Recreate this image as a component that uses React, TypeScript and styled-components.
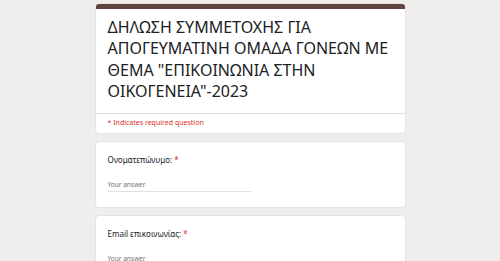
import React from "react";
import styled, { createGlobalStyle } from "styled-components";

const GlobalStyle = createGlobalStyle`
  body {
    margin: 0;
    background: #f0eeec;
    font-family: "Noto Sans", "Open Sans", sans-serif;
    color: #202124;
  }
`;

const Page = styled.div`
  width: 311px;
  margin: 3px auto 0;
  display: flex;
  flex-direction: column;
  gap: 7px;
`;

const Card = styled.section`
  background: #fff;
  border-radius: 4px;
  border: 1px solid #e6e3e1;
  box-sizing: border-box;
  overflow: hidden;
`;

const TopBar = styled.div`
  height: 5px;
  background: #5e4540;
`;

const TitleBlock = styled.div`
  padding: 8px 12px 11px;
  border-bottom: 1px solid #e3e1df;
`;

const Title = styled.h1`
  margin: 0;
  font-size: 16px;
  line-height: 21.3px;
  font-weight: 400;
`;

const Required = styled.div`
  padding: 4px 12px 5px;
  font-size: 7px;
  line-height: 10px;
  color: #d93025;
`;

const Question = styled(Card)`
  padding: 12px 12px 15px;
`;

const Label = styled.div`
  font-size: 8px;
  line-height: 11px;
  color: #202124;
`;

const Star = styled.span`
  color: #d93025;
`;

const Answer = styled.div`
  margin-top: 15px;
  width: 144px;
  font-size: 6.5px;
  line-height: 10px;
  padding-bottom: 1px;
  color: #70757a;
  border-bottom: 1px solid #e3e1df;
`;

const questions = ["Ονοματεπώνυμο:", "Email επικοινωνίας:"];

export default function App() {
  return (
    <>
      <GlobalStyle />
      <Page>
        <Card>
          <TopBar />
          <TitleBlock>
            <Title>
              ΔΗΛΩΣΗ ΣΥΜΜΕΤΟΧΗΣ ΓΙΑ ΑΠΟΓΕΥΜΑΤΙΝΗ ΟΜΑΔΑ ΓΟΝΕΩΝ ΜΕ ΘΕΜΑ
              "ΕΠΙΚΟΙΝΩΝΙΑ ΣΤΗΝ ΟΙΚΟΓΕΝΕΙΑ"-2023
            </Title>
          </TitleBlock>
          <Required>* Indicates required question</Required>
        </Card>
        {questions.map((q) => (
          <Question key={q}>
            <Label>
              {q} <Star>*</Star>
            </Label>
            <Answer>Your answer</Answer>
          </Question>
        ))}
      </Page>
    </>
  );
}
